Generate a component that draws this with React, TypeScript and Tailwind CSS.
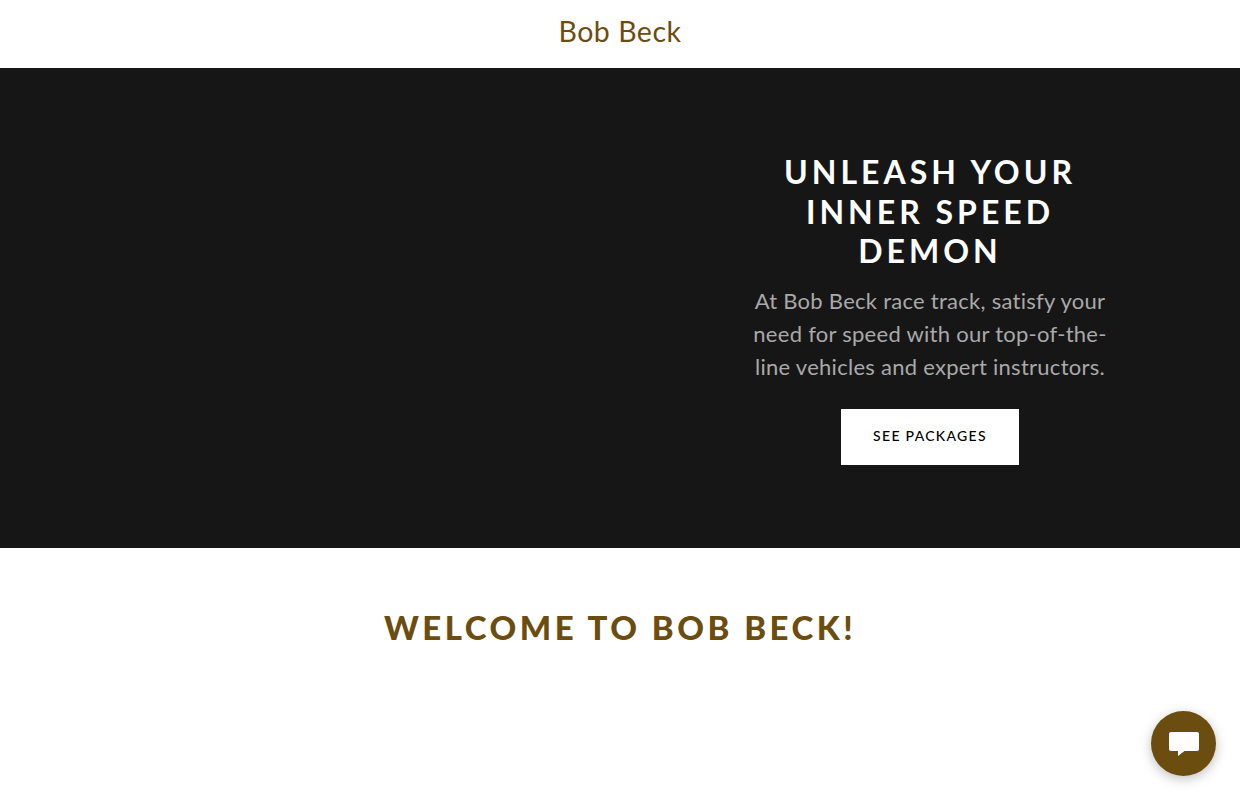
const App = () => {
  return (
    <div className="h-[800px] overflow-hidden bg-white font-['Lato',sans-serif] relative">
      <header className="h-[68px] flex justify-center pt-[17px]">
        <div className="text-[28.5px] leading-[28px] text-[#6b4e0f] tracking-[0.5px]">Bob Beck</div>
      </header>

      <section className="h-[480px] bg-[#161616] flex">
        <div className="w-1/2" />
        <div className="w-1/2 flex flex-col items-center pt-[84px]">
          <h1 className="text-[32px] leading-[39.5px] font-bold text-white text-center tracking-[4px] uppercase">
            Unleash your
            <br />
            inner speed
            <br />
            demon
          </h1>
          <p className="mt-[13px] text-[22px] leading-[33px] text-[#a9a9a9] text-center tracking-[0.27px]">
            At Bob Beck race track, satisfy your
            <br />
            need for speed with our top-of-the-
            <br />
            line vehicles and expert instructors.
          </p>
          <a className="mt-[26px] w-[178px] h-[56px] pb-[2px] bg-white flex items-center justify-center text-[14px] tracking-[1.3px] text-black uppercase font-medium">
            See packages
          </a>
        </div>
      </section>

      <section className="pt-[55px] flex justify-center">
        <h2 className="text-[33px] leading-[48px] font-black text-[#6b4e0f] tracking-[3.5px] uppercase">
          Welcome to Bob Beck!
        </h2>
      </section>

      <button className="absolute left-[1151px] top-[711px] w-[65px] h-[65px] rounded-full bg-[#6b4e0f] flex items-center justify-center shadow-[0_3px_12px_rgba(0,0,0,0.25)]">
        <svg width="30" height="24" viewBox="0 0 30 24" fill="#ffffff">
          <path d="M2 0h26a2 2 0 0 1 2 2v15a2 2 0 0 1-2 2H15.500L9 24v-5H2a2 2 0 0 1-2-2V2a2 2 0 0 1 2-2z" />
        </svg>
      </button>
    </div>
  );
};

export default App;
